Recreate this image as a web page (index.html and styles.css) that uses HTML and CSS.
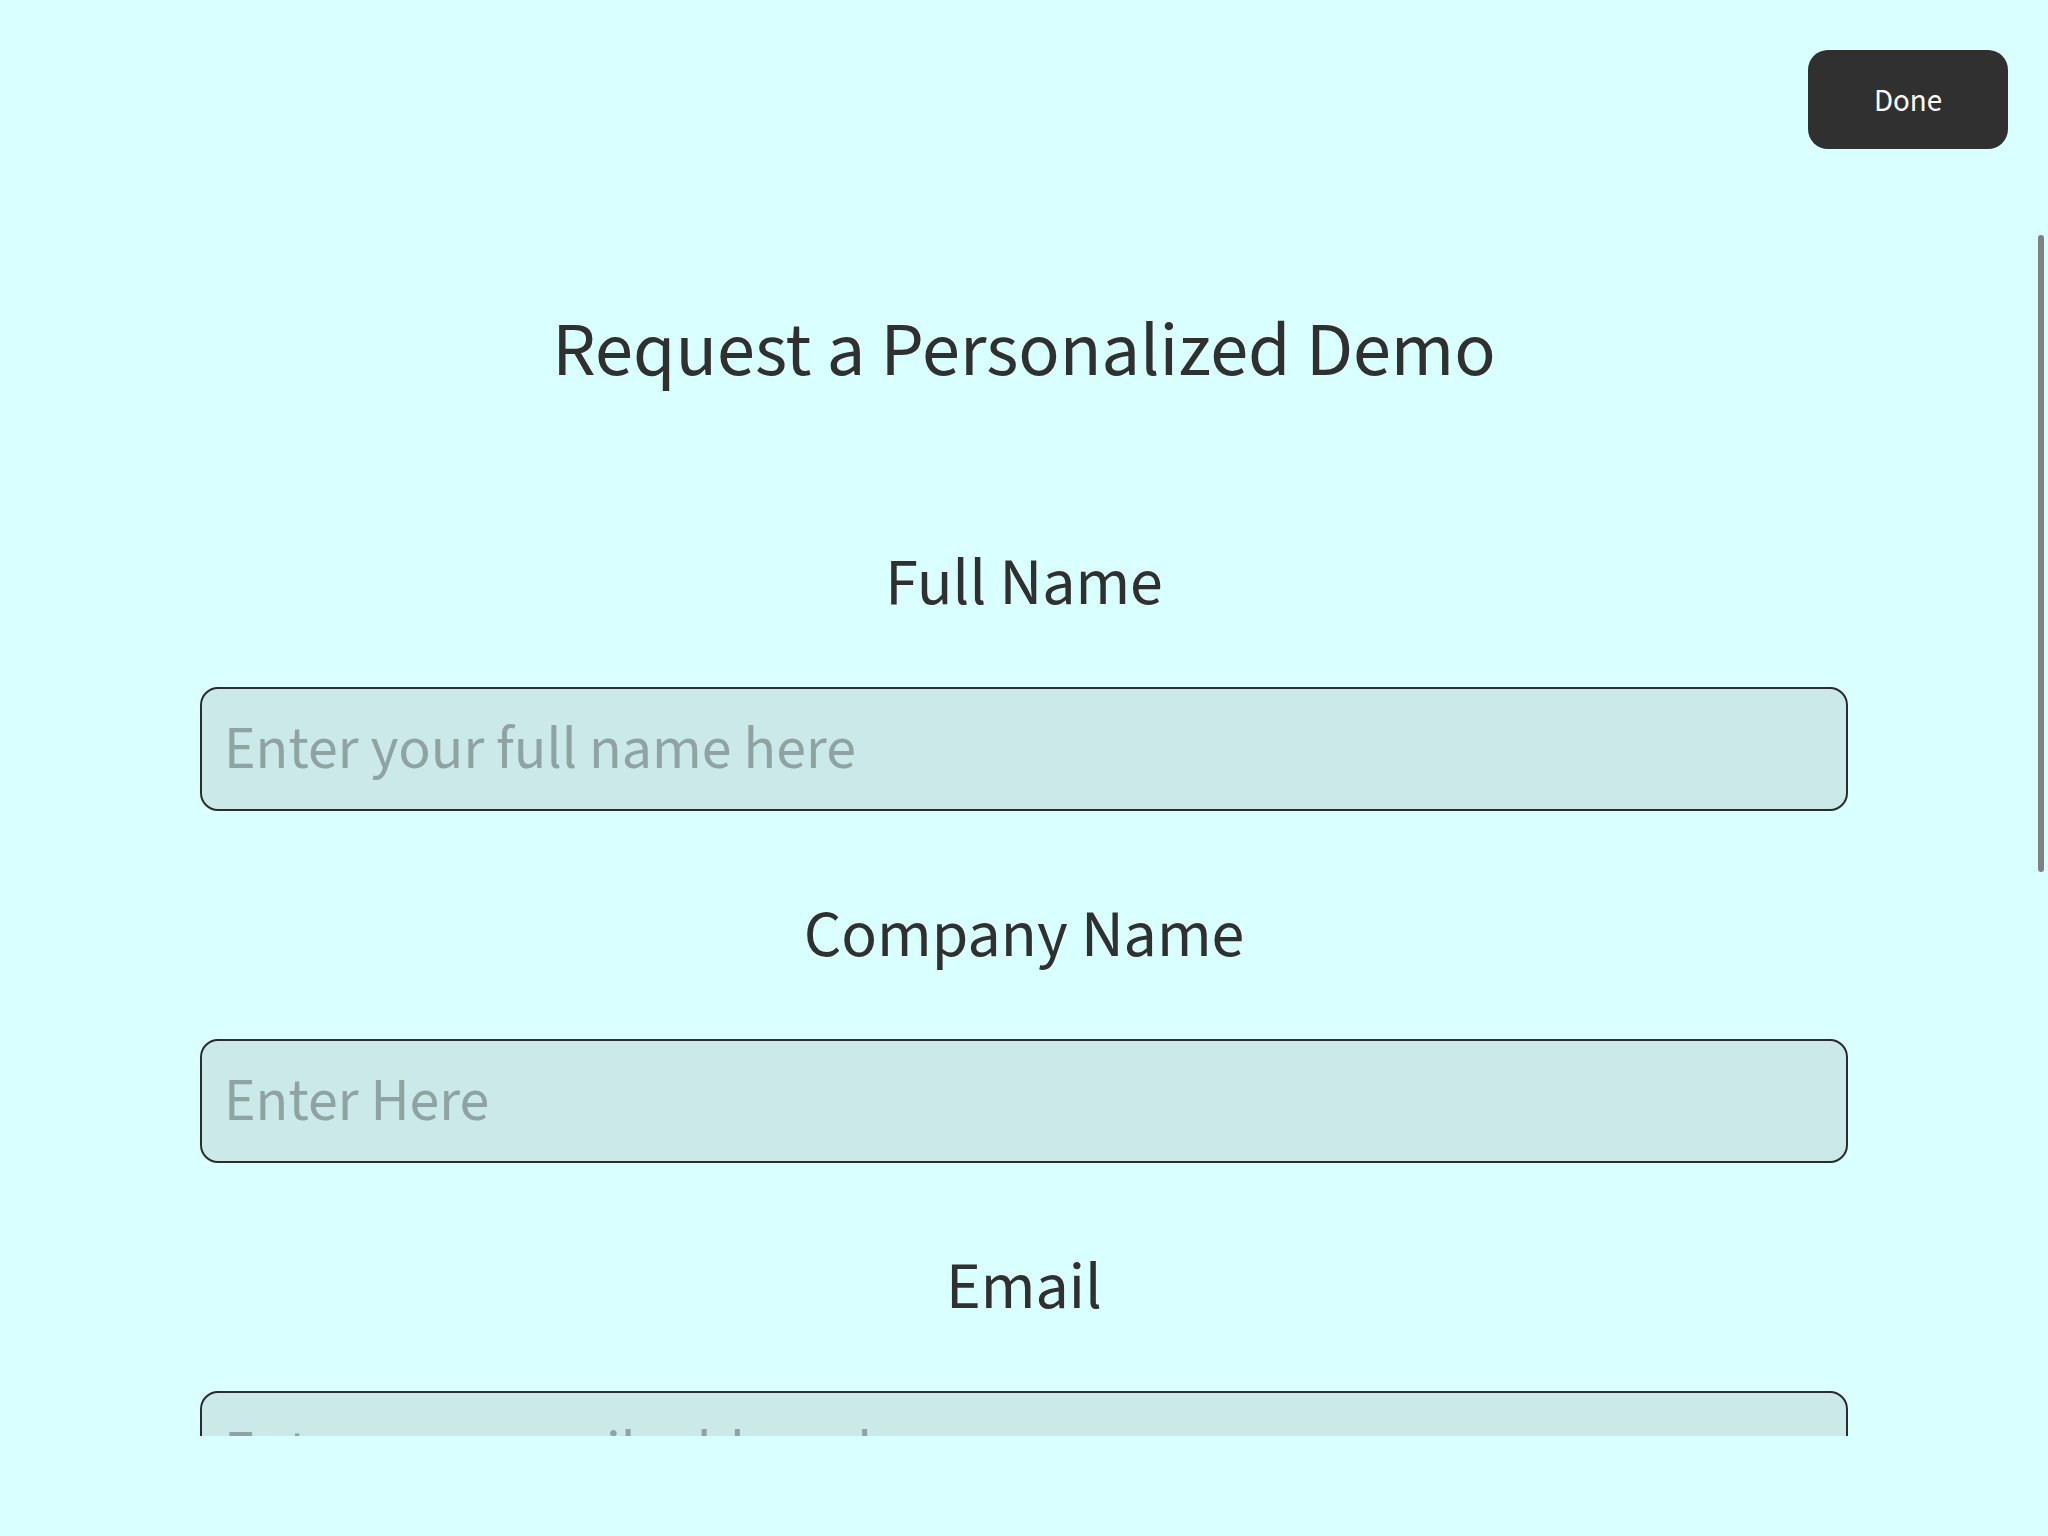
FILE: index.html
```html
<!DOCTYPE html>
<html lang="en">
<head>
<meta charset="utf-8">
<title>Request a Personalized Demo</title>
<link rel="stylesheet" href="styles.css">
</head>
<body>
<div class="screen">
  <header class="header">
    <button class="done-btn" type="button">Done</button>
  </header>
  <main class="scroll">
    <form class="form">
      <h1 class="title">Request a Personalized Demo</h1>
      <div class="field">
        <label class="label" for="fullname">Full Name</label>
        <input class="input" id="fullname" type="text" placeholder="Enter your full name here">
      </div>
      <div class="field">
        <label class="label" for="company">Company Name</label>
        <input class="input" id="company" type="text" placeholder="Enter Here">
      </div>
      <div class="field">
        <label class="label" for="email">Email</label>
        <input class="input" id="email" type="email" placeholder="Enter your email address here">
      </div>
    </form>
    <div class="scroll-thumb"></div>
  </main>
</div>
</body>
</html>
```
FILE: styles.css
```css
html, body {
  margin: 0;
  padding: 0;
  background: #d9ffff;
}

body {
  font-family: "Source Sans 3", "Lato", "Liberation Sans", sans-serif;
  color: #303030;
}

.screen {
  width: 2048px;
  height: 1536px;
  display: flex;
  flex-direction: column;
  background: #d9ffff;
}

.header {
  display: flex;
  justify-content: flex-end;
  padding: 50px 40px 0 0;
  height: 99px;
}

.done-btn {
  width: 200px;
  height: 99px;
  border: none;
  border-radius: 20px;
  background: #303030;
  color: #ffffff;
  font-family: "Source Sans 3", "Lato", sans-serif;
  font-size: 31px;
  font-weight: 400;
  padding: 2px 0 0 0;
  cursor: pointer;
}

.scroll {
  position: relative;
  height: 1287px;
  overflow: hidden;
}

.form {
  display: flex;
  flex-direction: column;
  align-items: stretch;
  padding: 153px 200px 0 200px;
}

.title {
  margin: 0 0 141px 0;
  font-size: 76.5px;
  line-height: 100px;
  font-weight: 400;
  text-align: center;
  color: #303030;
}

.field {
  display: flex;
  flex-direction: column;
  margin-bottom: 84px;
}

.label {
  display: block;
  font-size: 66px;
  line-height: 80px;
  text-align: center;
  color: #303030;
  margin-bottom: 64px;
}

.input {
  box-sizing: border-box;
  width: 100%;
  height: 124px;
  margin: 0;
  padding: 0 20px 0 22px;
  border: 2px solid #2c2c2c;
  border-radius: 18px;
  background: #cce9e9;
  font-family: "Source Sans 3", "Lato", sans-serif;
  font-size: 60px;
  color: #303030;
  outline: none;
}

.input::placeholder {
  color: #8fa3a3;
  opacity: 1;
}

.scroll-thumb {
  position: absolute;
  top: 86px;
  right: 4px;
  width: 6px;
  height: 637px;
  border-radius: 3px;
  background: #808080;
}
```
